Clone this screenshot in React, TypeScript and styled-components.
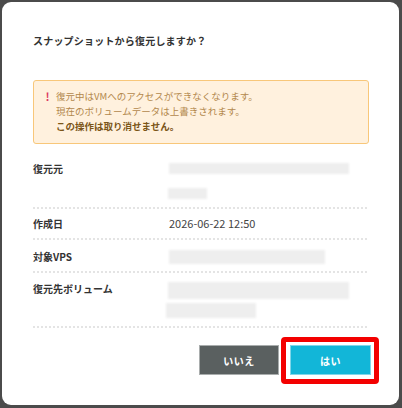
import React from "react";
import styled, { createGlobalStyle } from "styled-components";

const Global = createGlobalStyle`
  html, body { margin: 0; padding: 0; background: #4b4b4b; }
  body {
    width: 402px;
    height: 408px;
    overflow: hidden;
    font-family: "Noto Sans CJK JP", "Noto Sans", "Liberation Sans", sans-serif;
  }
`;

const Frame = styled.div`
  width: 402px;
  height: 408px;
  box-sizing: border-box;
  padding: 2px 3px 3px 2px;
  display: flex;
`;

const Modal = styled.div`
  flex: 1;
  background: #fff;
  border-radius: 9px;
  padding: 31px 30px 0 31px;
  display: flex;
  flex-direction: column;
  color: #333;
`;

const Title = styled.h2`
  margin: 0;
  font-size: 10px;
  line-height: 15px;
  font-weight: 700;
  color: #333;
  letter-spacing: 0.2px;
`;

const Notice = styled.div`
  margin-top: 32px;
  background: #fff1de;
  border: 1px solid #f8c77a;
  border-radius: 3px;
  padding: 8px 12px 9px 11px;
  display: flex;
  gap: 6px;
  font-size: 9.5px;
  line-height: 15px;
  color: #b3884c;
`;

const Bang = styled.span`
  color: #dc3a62;
  font-weight: 700;
  font-size: 11px;
  line-height: 15px;
  width: 5px;
  text-align: center;
`;

const NoticeText = styled.div`
  display: flex;
  flex-direction: column;
`;

const Strong = styled.strong`
  color: #7b5518;
  font-weight: 700;
`;

const Details = styled.div`
  margin-top: 9px;
  display: flex;
  flex-direction: column;
`;

const Row = styled.div<{ $pt: number; $pb: number }>`
  display: grid;
  grid-template-columns: 136px 1fr;
  padding: ${(p) => p.$pt}px 0 ${(p) => p.$pb}px;
  background: linear-gradient(to right, #e4e4e4 50%, transparent 0) left bottom / 4px 2px repeat-x;
`;

const Label = styled.div`
  font-size: 10px;
  line-height: 15px;
  font-weight: 700;
  color: #333;
`;

const Value = styled.div`
  display: flex;
  flex-direction: column;
  align-items: flex-start;
  font-size: 11px;
  line-height: 15px;
  color: #444;
`;

// redacted values show as soft grey smudges
const Smudge = styled.div<{ $w: number; $h: number; $mt: number; $ml?: number }>`
  width: ${(p) => p.$w}px;
  height: ${(p) => p.$h}px;
  margin-top: ${(p) => p.$mt}px;
  margin-left: ${(p) => p.$ml ?? 0}px;
  background: #eeeeee;
  filter: blur(1.2px);
`;

const Footer = styled.div`
  margin-top: 8px;
  display: flex;
  justify-content: flex-end;
  align-items: center;
  gap: 2px;
  margin-right: -10px;
`;

const Btn = styled.button<{ $primary?: boolean }>`
  width: ${(p) => (p.$primary ? 81 : 80)}px;
  height: 30px;
  border: 1px solid ${(p) => (p.$primary ? "#7fd6e9" : "#a9adad")};
  background: ${(p) => (p.$primary ? "#12b6d8" : "#5a6060")};
  color: #fff;
  font-family: inherit;
  font-size: 10px;
  font-weight: 700;
  letter-spacing: 0.5px;
  cursor: pointer;
  padding: 0;
`;

const Highlight = styled.span`
  display: inline-flex;
  padding: 3px 3px 4px 4px;
  border: 5px solid #f30000;
  border-radius: 4px;
  margin-top: 1px;
`;

export default function App() {
  return (
    <>
      <Global />
      <Frame>
        <Modal>
          <Title>スナップショットから復元しますか？</Title>
          <Notice>
            <Bang>!</Bang>
            <NoticeText>
              <span>復元中はVMへのアクセスができなくなります。</span>
              <span>現在のボリュームデータは上書きされます。</span>
              <Strong>この操作は取り消せません。</Strong>
            </NoticeText>
          </Notice>
          <Details>
            <Row $pt={8} $pb={10}>
              <Label>復元元</Label>
              <Value>
                <Smudge $w={180} $h={11} $mt={2} />
                <Smudge $w={39} $h={11} $mt={14} $ml={-1} />
              </Value>
            </Row>
            <Row $pt={7} $pb={9}>
              <Label>作成日</Label>
              <Value>2026-06-22 12:50</Value>
            </Row>
            <Row $pt={9} $pb={9}>
              <Label>対象VPS</Label>
              <Value>
                <Smudge $w={156} $h={14} $mt={1} />
              </Value>
            </Row>
            <Row $pt={8} $pb={10}>
              <Label>復元先ボリューム</Label>
              <Value>
                <Smudge $w={181} $h={17} $mt={1} $ml={-1} />
                <Smudge $w={90} $h={15} $mt={4} $ml={-3} />
              </Value>
            </Row>
          </Details>
          <Footer>
            <Btn>いいえ</Btn>
            <Highlight>
              <Btn $primary>はい</Btn>
            </Highlight>
          </Footer>
        </Modal>
      </Frame>
    </>
  );
}
